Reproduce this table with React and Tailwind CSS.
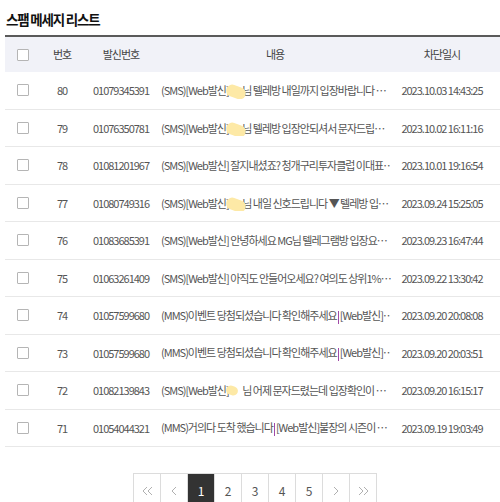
import React from "react";

const rows = [
  { no: 80, phone: "01079345391", blob: true, pre: "(SMS)[Web발신] ", post: "님 텔레방 내일까지 입장바랍니다 …", date: "2023.10.03 14:43:25" },
  { no: 79, phone: "01076350781", blob: true, pre: "(SMS)[Web발신] ", post: "님 텔레방 입장안되셔서 문자드립…", date: "2023.10.02 16:11:16" },
  { no: 78, phone: "01081201967", pre: "(SMS)[Web발신] 잘지내셨죠? 청개구리투자클럽 이대표…", date: "2023.10.01 19:16:54" },
  { no: 77, phone: "01080749316", blob: true, pre: "(SMS)[Web발신] ", post: "님 내일 신호드립니다 ▼ 텔레방 입…", date: "2023.09.24 15:25:05" },
  { no: 76, phone: "01083685391", pre: "(SMS)[Web발신] 안녕하세요 MG님 텔레그램방 입장요…", date: "2023.09.23 16:47:44" },
  { no: 75, phone: "01063261409", pre: "(SMS)[Web발신] 아직도 안들어오세요? 여의도 상위1%…", date: "2023.09.22 13:30:42" },
  { no: 74, phone: "01057599680", pre: "(MMS)이벤트 당첨되셨습니다 확인해주세요", bar: true, post: "[Web발신]…", date: "2023.09.20 20:08:08" },
  { no: 73, phone: "01057599680", pre: "(MMS)이벤트 당첨되셨습니다 확인해주세요", bar: true, post: "[Web발신]…", date: "2023.09.20 20:03:51" },
  { no: 72, phone: "01082139843", blob: true, small: true, pre: "(SMS)[Web발신] ", post: "님 어제 문자드렸는데 입장확인이 …", date: "2023.09.20 16:15:17" },
  { no: 71, phone: "01054044321", pre: "(MMS)거의다 도착 했습니다", bar: true, post: "[Web발신]불장의 시즌이 …", date: "2023.09.19 19:03:49" },
];

function Check() {
  return <span className="block w-[12px] h-[12px] border border-[#b5b5b5] bg-white rounded-[1px]" />;
}

function Chev({ dir = "left", double = false, color = "#b0b0b0" }) {
  const d = dir === "left" ? "M5 1 L1 5 L5 9" : "M1 1 L5 5 L1 9";
  return (
    <svg width={double ? 11 : 6} height="10" viewBox={double ? "0 0 11 10" : "0 0 6 10"} fill="none" stroke={color} strokeWidth="1">
      <path d={d} />
      {double && <path d={d} transform="translate(5 0)" />}
    </svg>
  );
}

export default function App() {
  const font = { fontFamily: '"Noto Sans CJK KR", "Noto Sans", sans-serif' };
  return (
    <div className="w-[500px] h-[502px] overflow-hidden bg-white" style={font}>
      <div className="pl-[6px] pt-[10px] h-[35px] text-[13.5px] leading-[18px] font-bold text-[#111] tracking-[-1.2px]">
        스팸 메세지 리스트
      </div>
      <div className="ml-[5px] w-[500px] border-t-2 border-[#5a5a5a]">
        <div className="flex h-[35px] items-center bg-[#f1f2f8] text-[11px] text-[#444] tracking-[-1px]">
          <div className="w-[36px] flex justify-center"><Check /></div>
          <div className="w-[42px] text-center">번호</div>
          <div className="w-[76px] text-center">발신번호</div>
          <div className="w-[232px] text-center">내용</div>
          <div className="w-[102px] text-center">차단일시</div>
        </div>
        {rows.map((r) => (
          <div key={r.no} className="flex h-[37.5px] items-center border-b border-[#e8e8e8] text-[11px] text-[#555] tracking-[-1px]">
            <div className="w-[36px] flex justify-center"><Check /></div>
            <div className="w-[42px] text-center">{r.no}</div>
            <div className="w-[76px] text-center">{r.phone}</div>
            <div className="w-[232px] pl-[2px] whitespace-nowrap overflow-hidden">
              {r.pre}
              {r.blob && (
                <span className="relative inline-block w-[12px] h-[10px] align-middle">
                  <span className={`absolute left-[-4px] top-[-1px] ${r.small ? "w-[12px] h-[9px]" : "w-[20px] h-[12px]"} rounded-full bg-[#fde9a6] rotate-[20deg]`} />
                </span>
              )}
              {r.bar && <span className="inline-block w-[1px] h-[13px] bg-[#a04aa8] align-middle mx-[1px]" />}
              {r.post}
            </div>
            <div className="w-[102px] text-center">{r.date}</div>
          </div>
        ))}
      </div>
      <div className="flex pl-[133px] mt-[26px] text-[12px] text-[#555]">
        {[
          <Chev dir="left" double />,
          <Chev dir="left" />,
          "1", "2", "3", "4", "5",
          <Chev dir="right" />,
          <Chev dir="right" double />,
        ].map((c, i) => (
          <div
            key={i}
            className={`w-[28px] h-[36px] -ml-px first:ml-0 flex items-center justify-center border border-[#dcdcdc] ${
              c === "1" ? "bg-[#333] text-white border-[#333]" : "bg-white"
            }`}
          >
            {c}
          </div>
        ))}
      </div>
    </div>
  );
}
